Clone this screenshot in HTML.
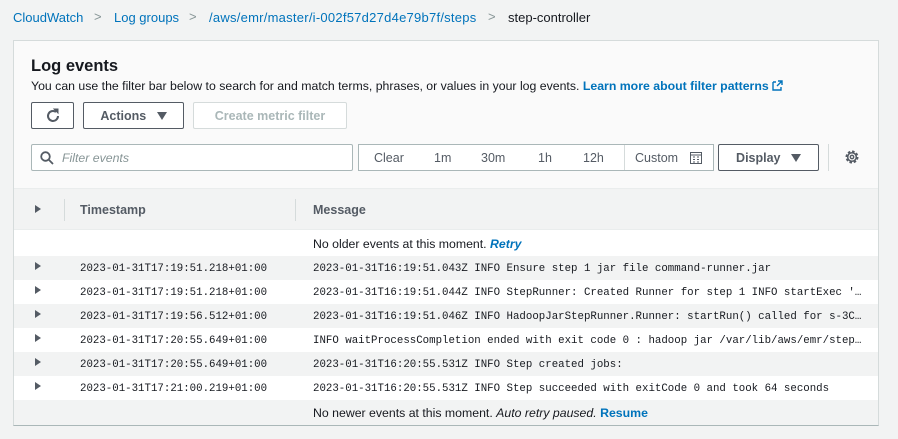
<!DOCTYPE html>
<html><head><meta charset="utf-8"><style>
*{margin:0;padding:0;box-sizing:border-box}
body{width:898px;height:439px;background:#f2f3f3;font-family:"Liberation Sans",sans-serif;color:#16191f;position:relative;overflow:hidden;font-size:12px}
.a{position:absolute;white-space:nowrap}
.bc{top:10px;font-size:13px;color:#0073bb}
.sep{color:#879596;font-size:13px;top:9px}
.panel{position:absolute;left:13px;top:40px;width:866px;height:386px;background:#fafafa;border:1px solid #d5dbdb;border-bottom:1px solid #aab7b8}
.btn{position:absolute;border:1px solid #545b64;border-radius:2px;background:#fff;font-weight:bold;font-size:12.5px;color:#545b64;display:flex;align-items:center;justify-content:center}
.row{position:absolute;left:0;width:864px;height:24px}
.mono{font-family:"Liberation Mono",monospace;font-size:10.75px;color:#16191f}
.tri{position:absolute;left:21px;width:0;height:0;border-left:6px solid #545b64;border-top:4px solid transparent;border-bottom:4px solid transparent}
</style></head><body>
<div class="a bc" style="left:13px">CloudWatch</div>
<div class="a sep" style="left:94px">&gt;</div>
<div class="a bc" style="left:114px">Log groups</div>
<div class="a sep" style="left:189px">&gt;</div>
<div class="a bc" style="left:209px;letter-spacing:0.25px">/aws/emr/master/i-002f57d27d4e79b7f/steps</div>
<div class="a sep" style="left:488px">&gt;</div>
<div class="a" style="left:508px;top:10px;font-size:13px">step-controller</div>

<div class="panel">
<div class="a" style="left:17px;top:16px;font-size:16.5px;font-weight:bold">Log events</div>
<div class="a" style="left:17px;top:38px;font-size:12.3px">You can use the filter bar below to search for and match terms, phrases, or values in your log events. <b style="color:#0073bb">Learn more about filter patterns</b> <svg width="11" height="11" viewBox="0 0 11 11" style="vertical-align:-1px"><path d="M1 2h3M1 2v8h8v-3M6 1h4v4M10 1L5 6" stroke="#0073bb" stroke-width="1.4" fill="none"/></svg></div>
<div class="btn" style="left:17px;top:61px;width:43px;height:27px"><svg width="16" height="16" viewBox="0 0 16 16"><path d="M13 8a5 5 0 1 1-2-4" stroke="#545b64" stroke-width="2" fill="none"/><path d="M9 1h4v4z" fill="#545b64" stroke="#545b64"/></svg></div>
<div class="btn" style="left:69px;top:61px;width:101px;height:27px">Actions&nbsp;&nbsp;&nbsp;<span style="display:inline-block;border-top:8px solid #545b64;border-left:5px solid transparent;border-right:5px solid transparent"></span></div>
<div class="btn" style="left:179px;top:61px;width:154px;height:27px;border-color:#d5dbdb;color:#aab7b8">Create metric filter</div>
<div class="a" style="left:17px;top:103px;width:322px;height:27px;background:#fff;border:1px solid #aab7b8;border-radius:2px"><svg style="position:absolute;left:8px;top:6px" width="14" height="14" viewBox="0 0 14 14"><circle cx="5.5" cy="5.5" r="4.3" stroke="#545b64" stroke-width="1.8" fill="none"/><path d="M8.8 8.8L13 13" stroke="#545b64" stroke-width="1.8"/></svg><span style="position:absolute;left:30px;top:6px;font-style:italic;color:#879596;font-size:12.3px">Filter events</span></div>
<div class="a" style="left:344px;top:103px;width:356px;height:27px;background:#fff;border:1px solid #aab7b8;font-size:12.5px;color:#545b64">
<span class="a" style="left:15px;top:6px">Clear</span><span class="a" style="left:75px;top:6px">1m</span><span class="a" style="left:122px;top:6px">30m</span><span class="a" style="left:179px;top:6px">1h</span><span class="a" style="left:224px;top:6px">12h</span>
<span class="a" style="left:265px;top:0;width:1px;height:25px;background:#d5dbdb"></span>
<span class="a" style="left:276px;top:6px">Custom</span>
<svg class="a" style="left:331px;top:7px" width="12" height="12" viewBox="0 0 12 12"><rect x="0.5" y="0.5" width="11" height="11" fill="none" stroke="#545b64"/><path d="M0 3h12M3 5h2M7 5h2M3 7.5h2M7 7.5h2M3 10h2M7 10h2" stroke="#545b64"/></svg></div>
<div class="btn" style="left:704px;top:103px;width:101px;height:27px">Display&nbsp;&nbsp;&nbsp;<span style="display:inline-block;border-top:8px solid #545b64;border-left:5px solid transparent;border-right:5px solid transparent"></span></div>
<div class="a" style="left:814px;top:103px;width:1px;height:27px;background:#d5dbdb"></div>
<svg class="a" style="left:830px;top:108px" width="16" height="16" viewBox="0 0 16 16"><circle cx="8" cy="8" r="5.5" fill="none" stroke="#545b64" stroke-width="2" stroke-dasharray="2.5 1.8"/><circle cx="8" cy="8" r="4.3" fill="none" stroke="#545b64" stroke-width="1.5"/><circle cx="8" cy="8" r="1.7" fill="none" stroke="#545b64" stroke-width="1.4"/></svg>

<div class="row" style="top:147px;height:42px;background:#f2f3f3;border-top:1px solid #eaeded;border-bottom:1px solid #eaeded">
<div class="tri" style="top:16px"></div>
<div class="a" style="left:50px;top:10px;width:1px;height:22px;background:#d5dbdb"></div>
<div class="a" style="left:66px;top:14px;font-weight:bold;color:#545b64;font-size:12.5px">Timestamp</div>
<div class="a" style="left:281px;top:10px;width:1px;height:22px;background:#d5dbdb"></div>
<div class="a" style="left:299px;top:14px;font-weight:bold;color:#545b64;font-size:12.5px">Message</div>
</div>
<div class="row" style="top:189px;height:26px;background:#fff"><div class="a" style="left:299px;top:7px;font-size:12.3px">No older events at this moment. <i style="color:#0073bb;font-weight:bold">Retry</i></div></div>

<div class="row" style="top:215px;background:#f2f3f3"><div class="tri" style="top:6px"></div><div class="a mono" style="left:66px;top:7px">2023-01-31T17:19:51.218+01:00</div><div class="a mono" style="left:299px;top:7px">2023-01-31T16:19:51.043Z INFO Ensure step 1 jar file command-runner.jar</div></div>
<div class="row" style="top:239px;background:#fff"><div class="tri" style="top:6px"></div><div class="a mono" style="left:66px;top:7px">2023-01-31T17:19:51.218+01:00</div><div class="a mono" style="left:299px;top:7px">2023-01-31T16:19:51.044Z INFO StepRunner: Created Runner for step 1 INFO startExec '…</div></div>
<div class="row" style="top:263px;background:#f2f3f3"><div class="tri" style="top:6px"></div><div class="a mono" style="left:66px;top:7px">2023-01-31T17:19:56.512+01:00</div><div class="a mono" style="left:299px;top:7px">2023-01-31T16:19:51.046Z INFO HadoopJarStepRunner.Runner: startRun() called for s-3C…</div></div>
<div class="row" style="top:287px;background:#fff"><div class="tri" style="top:6px"></div><div class="a mono" style="left:66px;top:7px">2023-01-31T17:20:55.649+01:00</div><div class="a mono" style="left:299px;top:7px">INFO waitProcessCompletion ended with exit code 0 : hadoop jar /var/lib/aws/emr/step…</div></div>
<div class="row" style="top:311px;background:#f2f3f3"><div class="tri" style="top:6px"></div><div class="a mono" style="left:66px;top:7px">2023-01-31T17:20:55.649+01:00</div><div class="a mono" style="left:299px;top:7px">2023-01-31T16:20:55.531Z INFO Step created jobs:</div></div>
<div class="row" style="top:335px;background:#fff"><div class="tri" style="top:6px"></div><div class="a mono" style="left:66px;top:7px">2023-01-31T17:21:00.219+01:00</div><div class="a mono" style="left:299px;top:7px">2023-01-31T16:20:55.531Z INFO Step succeeded with exitCode 0 and took 64 seconds</div></div>
<div class="row" style="top:359px;height:25px;background:#f2f3f3"><div class="a" style="left:299px;top:6px;font-size:12.3px">No newer events at this moment. <i>Auto retry paused.</i> <b style="color:#0073bb">Resume</b></div></div>
</div>
</body></html>
